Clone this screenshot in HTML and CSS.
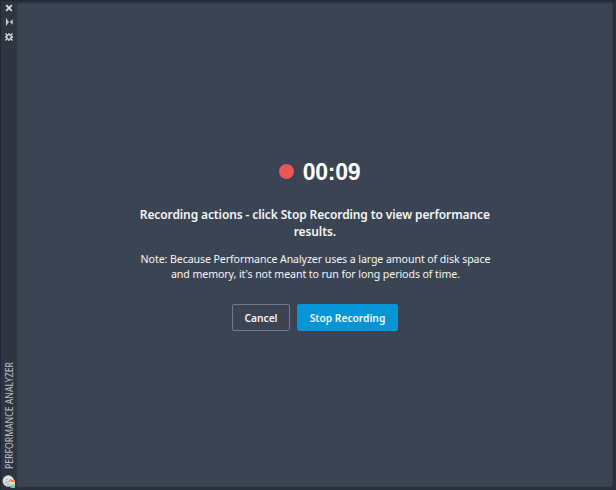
FILE: index.html
```html
<!DOCTYPE html>
<html lang="en">
<head>
<meta charset="utf-8">
<title>Performance Analyzer</title>
<link rel="stylesheet" href="styles.css">
</head>
<body>
<div class="palette">
  <aside class="rail">
    <div class="tools">
      <svg class="tool" viewBox="0 0 10 10"><path d="M2.2 2.2l5.6 5.6M7.8 2.2L2.2 7.8" stroke="#dcdfe3" stroke-width="1.8"/></svg>
      <svg class="tool" viewBox="0 0 10 10"><path d="M2.5 1.5v7" stroke="#c5c9d0" stroke-width="1.2"/><path d="M2.5 2.2L5.2 5 2.5 7.8zM8.7 2.2v5.6L5.8 5z" fill="#c5c9d0"/></svg>
      <svg class="tool" viewBox="0 0 10 10"><circle cx="5" cy="5" r="2.2" fill="none" stroke="#dcdfe3" stroke-width="1.1"/><path d="M5 1v2M5 7v2M1 5h2M7 5h2M1.5 1.5l2 2M6.5 6.5l2 2M8.5 1.5l-2 2M3.5 6.5l-2 2" stroke="#dcdfe3" stroke-width="1.3"/></svg>
    </div>
    <div class="caption">
      <span class="name">PERFORMANCE ANALYZER</span>
      <svg class="badge" viewBox="0 0 14 14"><circle cx="6.3" cy="6" r="5.7" fill="#dedfe0"/><path d="M3 8l2-1.5M4.5 4l1 1M6 7.5l3-3.5M5 9.5h2" stroke="#858990" stroke-width="1" fill="none"/><path d="M8.5 5H13v2.2H8.5z" fill="#f27b78"/><path d="M8.5 7H13v2.2H8.5z" fill="#ffda70"/><path d="M8.5 9H13v2.2H8.5z" fill="#91dbb0"/><path d="M8.5 11H13v2H8.5z" fill="#68b9ef"/></svg>
    </div>
  </aside>
  <main class="panel">
    <div class="timer"><span class="dot"></span><span class="time">00:09</span></div>
    <h1 class="title">Recording actions - click Stop Recording to view performance<br>results.</h1>
    <p class="note">Note: Because Performance Analyzer uses a large amount of disk space<br>and memory, it's not meant to run for long periods of time.</p>
    <div class="actions">
      <button class="btn cancel"><span class="label">Cancel</span></button>
      <button class="btn stop"><span class="label">Stop Recording</span></button>
    </div>
  </main>
</div>
</body>
</html>
```
FILE: styles.css
```css
* { box-sizing: border-box; }
body { margin: 0; background: #2a303c; font-family: "Noto Sans", sans-serif; color: #f5f6f7; }
.palette { display: flex; width: 616px; height: 490px; padding: 2px 3px 3px 0; border: 1px solid #222833; border-width: 1px 0 0 1px; }
.rail { width: 16px; display: flex; flex-direction: column; justify-content: space-between; align-items: center; background: #2e3440; }
.tools { display: flex; flex-direction: column; gap: 4px; }
.tool { display: block; width: 10px; height: 10px; }
.tool:last-child { margin-top: 1px; }
.caption { display: flex; flex-direction: column; align-items: center; margin-bottom: -2px; }
.name { writing-mode: vertical-rl; transform: rotate(180deg) scaleY(.87); font-size: 10px; line-height: 14px; color: #b9bdc5; white-space: nowrap; }
.badge { display: block; width: 14px; height: 14px; margin-top: -2px; }
.panel { flex: 1; display: flex; flex-direction: column; align-items: center; background: #3b4453; border-radius: 2px; border: 1px solid #374050; padding-top: 153px; white-space: nowrap; }
.timer { display: flex; align-items: center; gap: 8px; height: 28px; margin-left: 9px; font: bold 23px/28px "Liberation Sans", Arial, sans-serif; color: #fff; }
.time { letter-spacing: -0.3px; margin-left: 1px; padding-top: 2px; }
.dot { width: 15px; height: 15px; border-radius: 50%; background: #eb5555; }
.title { margin: 21px 0 0; font-size: 12.5px; line-height: 17px; font-weight: 600; text-align: center; letter-spacing: -0.1px; transform: scaleX(.957); }
.note { margin: 11px 0 0; font-size: 11.5px; line-height: 15px; text-align: center; letter-spacing: -0.1px; transform: scaleX(.923); }
.actions { display: flex; gap: 7px; margin-top: 23px; }
.btn { height: 27px; padding: 0; border-radius: 2px; font: 600 11px/25px "Noto Sans", sans-serif; color: #f5f6f7; }
.label { display: block; transform: scaleX(.93); }
.cancel { width: 58px; background: transparent; border: 1px solid #6f7c8d; }
.stop { width: 101px; background: #0696d7; border: 1px solid #0696d7; }
```
